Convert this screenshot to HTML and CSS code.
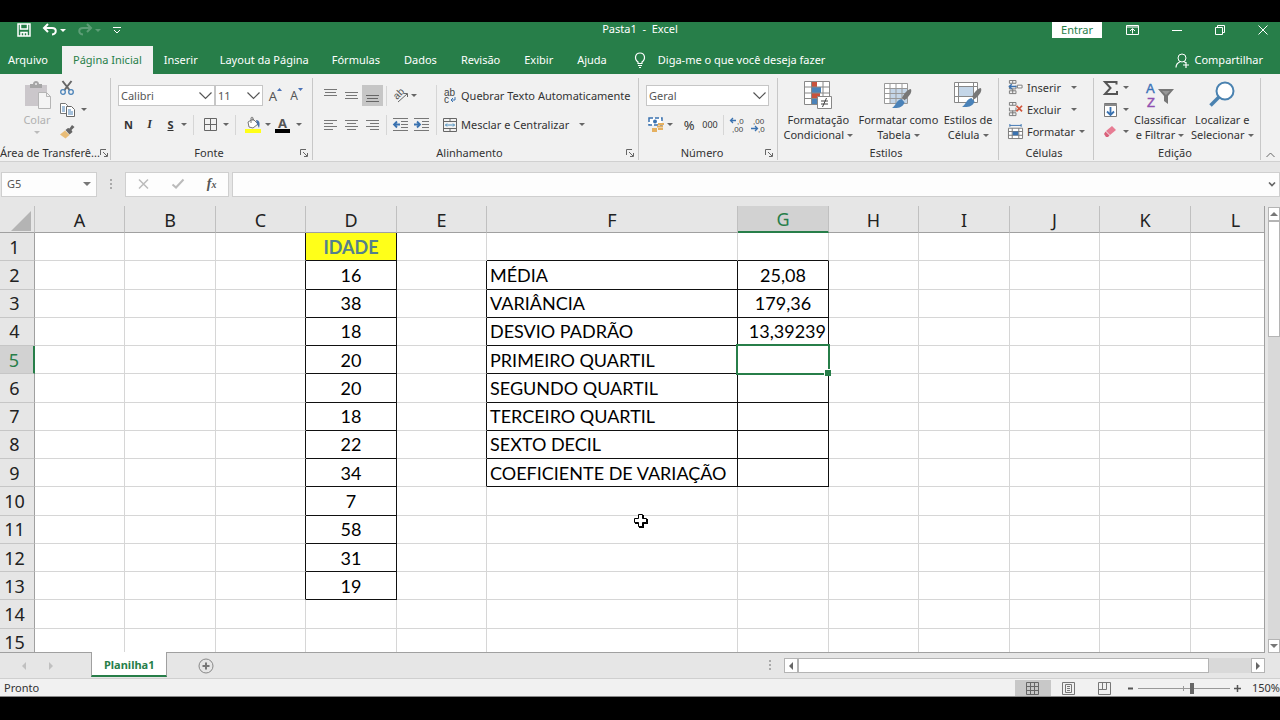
FILE: index.html
```html
<!DOCTYPE html>
<html lang="pt-BR">
<head>
<meta charset="UTF-8" />
<meta name="viewport" content="width=device-width, initial-scale=1" />
<title>Pasta1 - Excel</title>
<link rel="stylesheet" href="styles.css">
</head>
<body>

  <!-- Shared icons -->
  <svg class="defs" aria-hidden="true">
    <symbol id="launcher" viewBox="0 0 8 8"><path d="M.5 6V.5H6M3 3l4 4M7.5 4v3.5H4" fill="none" stroke="#666"/></symbol>
    <symbol id="cells" viewBox="0 0 16 16"><path d="M1.500.500h7v3h-7zM1.500 11.500h7v3h-7zM5 .500v3M5 11.500v3M1.500 6v3.500h7V6M5 9v3" fill="none" stroke="#777"/></symbol>
    <symbol id="brush" viewBox="0 0 16 16"><path d="M15 0c1.500 2-1 6-5 9L8 7c2-4 5-7 7-7z" fill="#777"/><path d="M7.500 8 10 10.500C9 15 4 15.500 0 15c3-1 3-6 7.500-7z" fill="#4a82b8"/></symbol>
  </svg>

  <header class="titlebar">
    <div class="quick">
      <button aria-label="Salvar"><svg width="14" height="14" viewBox="0 0 14 14"><path d="M1 1h12v12H1zM3.500 1v5h7V1M4 13V9.500h6V13M7 10v3" fill="none" stroke="#fff" stroke-width="1.500"/></svg></button>
      <button aria-label="Desfazer"><svg width="14" height="12" viewBox="0 0 14 12"><path d="M5 0 1 4l4 4M1.500 4H9c5 0 5 6 0 6.500" fill="none" stroke="#fff" stroke-width="2"/></svg><span class="caret light"></span></button>
      <button class="faded" aria-label="Refazer"><svg width="14" height="12" viewBox="0 0 14 12"><path d="m9 0 4 4-4 4M12.500 4H5c-5 0-5 6 0 6.500" fill="none" stroke="#fff" stroke-width="2"/></svg><span class="caret light"></span></button>
      <button aria-label="Personalizar"><svg width="8" height="7" viewBox="0 0 8 7"><path d="M0 .500h8M1 3l3 3 3-3" fill="none" stroke="#fff"/></svg></button>
    </div>
    <h1>Pasta1&nbsp; -&nbsp; Excel</h1>
    <div class="window-buttons">
      <button class="signin">Entrar</button>
      <button aria-label="Opções da Faixa de Opções"><svg width="13" height="10" viewBox="0 0 13 10"><path d="M.500.500h12v9H.500zM.500 2h12M6.500 8.500V4M4 6l2.500-2.500L9 6" fill="none" stroke="#fff"/></svg></button>
      <button aria-label="Minimizar"><svg width="10" height="10" viewBox="0 0 10 10"><path d="M0 5.500h10" stroke="#fff"/></svg></button>
      <button aria-label="Restaurar"><svg width="10" height="10" viewBox="0 0 10 10"><path d="M.500 2.500h7v7h-7zM2.500 2V.500h7v7H8" fill="none" stroke="#fff"/></svg></button>
      <button aria-label="Fechar"><svg width="10" height="10" viewBox="0 0 10 10"><path d="m.500.500 9 9M9.500.500l-9 9" stroke="#fff"/></svg></button>
    </div>
  </header>

  <nav class="tabs">
    <a href="#" class="file">Arquivo</a>
    <a href="#" class="active">Página Inicial</a>
    <a href="#">Inserir</a>
    <a href="#">Layout da Página</a>
    <a href="#">Fórmulas</a>
    <a href="#">Dados</a>
    <a href="#">Revisão</a>
    <a href="#">Exibir</a>
    <a href="#">Ajuda</a>
    <a href="#" class="tell"><svg width="12" height="16" viewBox="0 0 12 16"><path d="M4 11.500V10C0 7 1 1 6 1s6 6 2 9v1.500zM4 13.500h4M5 15.500h2" fill="none" stroke="#fff" stroke-width="1.200"/></svg>Diga-me o que você deseja fazer</a>
    <a href="#" class="share"><svg width="15" height="15" viewBox="0 0 15 15"><circle cx="7" cy="5" r="4" fill="none" stroke="#fff"/><path d="M1 14.500c0-3 2-5 4.500-6M8.500 8.500l2 1M8 12h6M11 9v6" fill="none" stroke="#fff" stroke-width="1.200"/></svg>Compartilhar</a>
  </nav>

  <section class="ribbon">
    <div class="group clipboard">
      <div class="group-body">
        <button class="big disabled"><svg width="28" height="28" viewBox="0 0 28 28"><path d="M2 4h22v21H2z" fill="#cbc7cb"/><path d="M7 3h3c0-4 6-4 6 0h3v4H7z" fill="#a5a5a5"/><circle cx="13" cy="3" r="1" fill="#eee"/><path d="M15.500 11.500h8l4 4v12h-12zM23.500 11.500v4h4" fill="#f4f4f4" stroke="#b5b5b5"/></svg><span>Colar</span><span class="caret"></span></button>
        <div class="stack">
          <button aria-label="Recortar"><svg width="14" height="14" viewBox="0 0 14 14"><path d="m2.500 0 7 9M11.500 0l-7 9" stroke="#666" stroke-width="2"/><circle cx="3" cy="11" r="2.300" fill="none" stroke="#4a82b8" stroke-width="1.300"/><circle cx="11" cy="11" r="2.300" fill="none" stroke="#4a82b8" stroke-width="1.300"/></svg></button>
          <button aria-label="Copiar"><svg width="15" height="14" viewBox="0 0 15 14"><path d="M.500.500h5l2 2v8h-7z" fill="#fff" stroke="#777"/><path d="M6.500 3.500h5l3 3v7h-8z" fill="#fff" stroke="#666"/><path d="M2 4h3M2 6h3M2 8h3M8 7h3M8 9h5M8 11h5" stroke="#4a82b8"/></svg><span class="caret"></span></button>
          <button aria-label="Pincel de Formatação"><svg width="15" height="14" viewBox="0 0 15 14"><path d="m12 0 2.500 2-3 3 1 2-3 2.500L5.500 5 8 3l1.500.500z" fill="#666"/><path d="m5 5.500 4.500 4.500-4 3.500L0 9.500z" fill="#e9bd78"/></svg></button>
        </div>
      </div>
      <div class="group-label"><span>Área de Transferê...</span><button aria-label="Mais opções"><svg width="8" height="8"><use href="#launcher"/></svg></button></div>
    </div>

    <div class="group font">
      <div class="group-body rows">
        <div class="row">
          <select class="combo font-name" aria-label="Fonte"><option>Calibri</option></select><select class="combo font-size" aria-label="Tamanho da fonte"><option>11</option></select>
          <button class="tool grow" aria-label="Aumentar fonte">A<svg width="5" height="4" viewBox="0 0 5 4"><path d="M0 3 2.500 0 5 3z" fill="#4a72b8"/></svg></button>
          <button class="tool shrink" aria-label="Diminuir fonte">A<svg width="5" height="4" viewBox="0 0 5 4"><path d="M0 0h5L2.500 3z" fill="#4a72b8"/></svg></button>
        </div>
        <div class="row">
          <button class="tool bold">N</button>
          <button class="tool italic">I</button>
          <button class="tool underline">S</button><span class="caret"></span>
          <span class="sep"></span>
          <button class="tool" aria-label="Bordas"><svg width="13" height="13" viewBox="0 0 13 13"><path d="M.500.500h12v12H.500zM6.500.500v12M.500 6.500h12" fill="none" stroke="#666"/></svg></button><span class="caret"></span>
          <span class="sep"></span>
          <button class="tool" aria-label="Cor de preenchimento"><svg width="16" height="16" viewBox="0 0 16 16"><path d="m3 5 5-3 5 5-5 4-4-1z" fill="#fff" stroke="#777"/><path d="M6 6V1c0-1 2-1 2 0v3" fill="none" stroke="#777"/><path d="M11 3c4 0 4 4 3 8l-2-4z" fill="#4a72a8"/><path d="M0 12h16v4H0z" fill="#ffff19"/></svg></button><span class="caret"></span>
          <button class="tool font-color" aria-label="Cor da fonte">A</button><span class="caret"></span>
        </div>
      </div>
      <div class="group-label"><span>Fonte</span><button aria-label="Mais opções"><svg width="8" height="8"><use href="#launcher"/></svg></button></div>
    </div>

    <div class="group align">
      <div class="group-body">
        <div class="rows">
          <div class="row">
            <button class="tool" aria-label="Alinhar em cima"><svg width="13" height="15" viewBox="0 0 13 15"><path d="M0 1.500h13M1 4.500h11M0 7.500h13" stroke="#777"/></svg></button>
            <button class="tool" aria-label="Alinhar no meio"><svg width="13" height="15" viewBox="0 0 13 15"><path d="M0 4.500h13M1 7.500h11M0 10.500h13" stroke="#777"/></svg></button>
            <button class="tool pressed" aria-label="Alinhar embaixo"><svg width="13" height="15" viewBox="0 0 13 15"><path d="M0 7.500h13M1 10.500h11M0 13.500h13" stroke="#666"/></svg></button>
            <span class="sep"></span>
            <button class="tool orient" aria-label="Orientação"><svg width="17" height="15" viewBox="0 0 17 15"><text transform="translate(5 12) rotate(-45)" font-size="10" fill="#555">ab</text><path d="m6 14 9-8M11.500 5.500h4V9" fill="none" stroke="#666"/></svg></button><span class="caret"></span>
          </div>
          <div class="row">
            <button class="tool" aria-label="Alinhar à esquerda"><svg width="13" height="13" viewBox="0 0 13 13"><path d="M0 2.500h13M0 5.500h9M0 8.500h13M0 11.500h9" stroke="#777"/></svg></button>
            <button class="tool" aria-label="Centralizar"><svg width="13" height="13" viewBox="0 0 13 13"><path d="M0 2.500h13M2 5.500h9M0 8.500h13M2 11.500h9" stroke="#777"/></svg></button>
            <button class="tool" aria-label="Alinhar à direita"><svg width="13" height="13" viewBox="0 0 13 13"><path d="M0 2.500h13M4 5.500h9M0 8.500h13M4 11.500h9" stroke="#777"/></svg></button>
            <span class="sep"></span>
            <button class="tool" aria-label="Diminuir recuo"><svg width="15" height="13" viewBox="0 0 15 13"><path d="M0 .500h15M8 3.500h7M8 6.500h7M8 9.500h7M0 12.500h15" stroke="#777"/><path d="M7 6.500H1M4 3.500l-3 3 3 3" fill="none" stroke="#3a72b0" stroke-width="1.800"/></svg></button>
            <button class="tool" aria-label="Aumentar recuo"><svg width="15" height="13" viewBox="0 0 15 13"><path d="M0 .500h15M8 3.500h7M8 6.500h7M8 9.500h7M0 12.500h15" stroke="#777"/><path d="M0 6.500h6M3 3.500l3 3-3 3" fill="none" stroke="#3a72b0" stroke-width="1.800"/></svg></button>
          </div>
        </div>
        <span class="sep tall"></span>
        <div class="rows">
          <button class="wide"><svg width="14" height="16" viewBox="0 0 14 16"><text x="1" y="8" font-size="10" fill="#444">ab</text><text x="1" y="15" font-size="10" fill="#444">c</text><path d="M12 9v3H8M10 10l-2 2 2 2" fill="none" stroke="#3a72b0"/></svg>Quebrar Texto Automaticamente</button>
          <button class="wide"><svg width="14" height="14" viewBox="0 0 14 14"><path d="M.500.500h13v13H.500zM.500 3.500h13M.500 10.500h13M7 .500v3M7 10.500v3" fill="none" stroke="#666"/><path d="M2.500 7h9M4 5.500 2.500 7 4 8.500M10 5.500 11.500 7 10 8.500" fill="none" stroke="#4a8fc0"/></svg>Mesclar e Centralizar<span class="caret spaced"></span></button>
        </div>
      </div>
      <div class="group-label"><span>Alinhamento</span><button aria-label="Mais opções"><svg width="8" height="8"><use href="#launcher"/></svg></button></div>
    </div>

    <div class="group number">
      <div class="group-body rows">
        <select class="combo" aria-label="Formato de número"><option>Geral</option></select>
        <div class="row">
          <button class="tool" aria-label="Formato de contabilização"><svg width="16" height="15" viewBox="0 0 16 15"><path d="M1 1h13v7H1z" fill="#fff" stroke="#3a72b0" stroke-width="1.500" stroke-dasharray="4 2"/><circle cx="7" cy="4.500" r="2" fill="#3a72b0"/><path d="M10 7h6M9 9.500h6M4 12h5M4 14h5M10 12h5" stroke="#e5b060" stroke-width="1.800"/></svg></button><span class="caret"></span>
          <button class="tool percent">%</button>
          <button class="tool zeros">000</button>
          <span class="sep"></span>
          <button class="tool" aria-label="Aumentar casas decimais"><svg width="15" height="15" viewBox="0 0 15 15"><path d="M6 3.500H1M3 1 .500 3.500 3 6" fill="none" stroke="#3a72b0" stroke-width="1.300"/><text x="7" y="7" font-size="8" fill="#444">,0</text><text x="2" y="15" font-size="8" fill="#444">,00</text></svg></button>
          <button class="tool" aria-label="Diminuir casas decimais"><svg width="15" height="15" viewBox="0 0 15 15"><path d="M0 11.500h6M4 9l2.500 2.500L4 14" fill="none" stroke="#3a72b0" stroke-width="1.300"/><text x="2" y="7" font-size="8" fill="#444">,00</text><text x="7" y="15" font-size="8" fill="#444">,0</text></svg></button>
        </div>
      </div>
      <div class="group-label"><span>Número</span><button aria-label="Mais opções"><svg width="8" height="8"><use href="#launcher"/></svg></button></div>
    </div>

    <div class="group styles">
      <div class="group-body">
        <button class="big"><svg width="28" height="28" viewBox="0 0 28 28"><path d="M.500.500h25v23H.500z" fill="#fff"/><path d="M8 1h5v5H8zM8 12h8v5H8z" fill="#c8523c"/><path d="M8 6h9v6H8zM8 17h5v6H8z" fill="#4a82b8"/><path d="M.500.500h25v23H.500zM.500 6h25M.500 12h25M.500 17.500h25M7.500.500v23M19 .500v23" fill="none" stroke="#888"/><path d="M13.500 15.500h14v12h-14z" fill="#fff" stroke="#888"/><path d="M17 20h7M17 23h7M22.500 17l-4 9" stroke="#444"/></svg><span>Formatação</span><span>Condicional<i class="caret"></i></span></button>
        <button class="big"><svg width="28" height="28" viewBox="0 0 28 28"><path d="M.500 2.500h23v20H.500z" fill="#fff"/><path d="M6 8h17v14H6z" fill="#c4d6e8"/><path d="M.500 2.500h23v20H.500zM.500 7.500h23M.500 12.500h23M.500 17.500h23M6 2.500v20M12 2.500v20M18 2.500v20" fill="none" stroke="#999"/><use href="#brush" x="8" y="8" width="20" height="20"/></svg><span>Formatar como</span><span>Tabela<i class="caret"></i></span></button>
        <button class="big"><svg width="28" height="28" viewBox="0 0 28 28"><path d="M.500 1.500h23v20H.500z" fill="#fff"/><path d="M5 6h14v9H5z" fill="#c4d6e8"/><path d="M.500 1.500h23v20H.500zM.500 5.500h23M.500 15.500h23M4.500 1.500v20M19.500 1.500v20" fill="none" stroke="#888"/><use href="#brush" x="8" y="7" width="20" height="20"/></svg><span>Estilos de</span><span>Célula<i class="caret"></i></span></button>
      </div>
      <div class="group-label"><span>Estilos</span></div>
    </div>

    <div class="group cells">
      <div class="group-body stack">
        <button><svg width="15" height="15" viewBox="0 0 16 16"><use href="#cells" width="16" height="16"/><path d="M10 5.500h5v3h-5z" fill="#fff" stroke="#777"/><path d="M9 7H1M4 4.500 1.500 7 4 9.500" fill="none" stroke="#3a72b0" stroke-width="1.500"/></svg>Inserir<span class="caret spaced"></span></button>
        <button><svg width="15" height="15" viewBox="0 0 16 16"><use href="#cells" width="16" height="16"/><path d="m9 4 6 6M15 4l-6 6" stroke="#d0553c" stroke-width="1.800"/></svg>Excluir<span class="caret spaced"></span></button>
        <button><svg width="15" height="15" viewBox="0 0 16 16"><path d="M2 1.500h12M2 0v3M14 0v3" stroke="#3a72b0"/><path d="M.500 4.500h15v11H.500zM.500 8h15M.500 12h15M4.500 4.500v11M11.500 4.500v11" fill="#fff" stroke="#777"/><path d="M5 8h6v4H5z" fill="#3a72b0"/></svg>Formatar<span class="caret"></span></button>
      </div>
      <div class="group-label"><span>Células</span></div>
    </div>

    <div class="group editing">
      <div class="group-body">
        <div class="stack">
          <button aria-label="AutoSoma"><svg width="15" height="14" viewBox="0 0 15 14"><path d="M13.500 3.500V1H2l5.500 6L2 13h12v-3" fill="none" stroke="#555" stroke-width="2"/></svg><span class="caret"></span></button>
          <button aria-label="Preencher"><svg width="15" height="14" viewBox="0 0 15 14"><path d="M1.500.500h12v13h-12z" fill="#fff" stroke="#777"/><path d="M1 1h13v2H1z" fill="#888"/><path d="M7.500 4v8M4 8.500 7.500 12 11 8.500" fill="none" stroke="#3a72b0" stroke-width="1.800"/></svg><span class="caret"></span></button>
          <button aria-label="Limpar"><svg width="15" height="14" viewBox="0 0 15 14"><path d="m9 1 4 4-6 5-4-4z" fill="#e77c93"/><path d="m2.500 6.500 4 4L5 12H3L1 9z" fill="#d9607a"/></svg><span class="caret"></span></button>
        </div>
        <button class="big"><svg width="28" height="28" viewBox="0 0 28 28"><text x="0" y="12" font-size="13" fill="#3a72b8" stroke="#3a72b8" stroke-width=".4">A</text><text x="1" y="26" font-size="13" fill="#9050b0" stroke="#9050b0" stroke-width=".4">Z</text><path d="M12 8h16l-6 7v8l-4-3v-5z" fill="#777"/><path d="M16 10h8l-4 4z" fill="#999"/></svg><span>Classificar</span><span>e Filtrar<i class="caret"></i></span></button>
        <button class="big"><svg width="28" height="28" viewBox="0 0 28 28"><circle cx="17" cy="10" r="8.500" fill="#fff" stroke="#4a82b0" stroke-width="2"/><path d="m11 16-8.500 8.500" stroke="#4a82b0" stroke-width="3.500"/></svg><span>Localizar e</span><span>Selecionar<i class="caret"></i></span></button>
      </div>
      <div class="group-label"><span>Edição</span></div>
    </div>

    <button class="collapse" aria-label="Recolher a Faixa de Opções"><svg width="9" height="6" viewBox="0 0 9 6"><path d="m.500 5 4-4 4 4" fill="none" stroke="#666"/></svg></button>
  </section>

  <section class="formula-bar">
    <select class="name-box" aria-label="Caixa de nome"><option>G5</option></select>
    <span class="dots"></span>
    <div class="formula-buttons">
      <button aria-label="Cancelar"><svg width="11" height="10" viewBox="0 0 11 10"><path d="m1 .500 9 9M10 .500l-9 9" stroke="#bbb" stroke-width="1.500"/></svg></button>
      <button aria-label="Inserir"><svg width="12" height="10" viewBox="0 0 12 10"><path d="m.500 5.500 3.500 3 7.500-8" fill="none" stroke="#bbb" stroke-width="2"/></svg></button>
      <button class="fx" aria-label="Inserir função">f<sub>x</sub></button>
    </div>
    <input class="formula" type="text" aria-label="Barra de fórmulas">
  </section>

  <main class="workspace">
    <div class="sheet">
      <table>
        <colgroup>
          <col class="heads"><col class="even"><col class="odd"><col class="even"><col class="odd"><col class="even"><col class="labels"><col class="odd"><col class="even"><col class="odd"><col class="even"><col class="odd"><col class="even">
        </colgroup>
        <thead>
          <tr><th class="corner"><svg width="20" height="20" viewBox="0 0 20 20"><path d="M20 0v20H0z" fill="#b4b4b4"/></svg></th><th>A</th><th>B</th><th>C</th><th>D</th><th>E</th><th>F</th><th class="current">G</th><th>H</th><th>I</th><th>J</th><th>K</th><th>L</th></tr>
        </thead>
        <tbody>
          <tr><th>1</th><td></td><td></td><td class="line-right"></td><td class="box title">IDADE</td><td></td><td class="line-bottom"></td><td class="line-bottom"></td><td></td><td></td><td></td><td></td><td></td></tr>
          <tr><th>2</th><td></td><td></td><td class="line-right"></td><td class="box">16</td><td class="line-right"></td><td class="box name">MÉDIA</td><td class="box">25,08</td><td></td><td></td><td></td><td></td><td></td></tr>
          <tr><th>3</th><td></td><td></td><td class="line-right"></td><td class="box">38</td><td class="line-right"></td><td class="box name">VARIÂNCIA</td><td class="box">179,36</td><td></td><td></td><td></td><td></td><td></td></tr>
          <tr><th>4</th><td></td><td></td><td class="line-right"></td><td class="box">18</td><td class="line-right"></td><td class="box name">DESVIO PADRÃO</td><td class="box number-right">13,39239</td><td></td><td></td><td></td><td></td><td></td></tr>
          <tr><th class="current">5</th><td></td><td></td><td class="line-right"></td><td class="box">20</td><td class="line-right"></td><td class="box name">PRIMEIRO QUARTIL</td><td class="box selected"></td><td></td><td></td><td></td><td></td><td></td></tr>
          <tr><th>6</th><td></td><td></td><td class="line-right"></td><td class="box">20</td><td class="line-right"></td><td class="box name">SEGUNDO QUARTIL</td><td class="box"></td><td></td><td></td><td></td><td></td><td></td></tr>
          <tr><th>7</th><td></td><td></td><td class="line-right"></td><td class="box">18</td><td class="line-right"></td><td class="box name">TERCEIRO QUARTIL</td><td class="box"></td><td></td><td></td><td></td><td></td><td></td></tr>
          <tr><th>8</th><td></td><td></td><td class="line-right"></td><td class="box">22</td><td class="line-right"></td><td class="box name">SEXTO DECIL</td><td class="box"></td><td></td><td></td><td></td><td></td><td></td></tr>
          <tr><th>9</th><td></td><td></td><td class="line-right"></td><td class="box">34</td><td class="line-right"></td><td class="box name">COEFICIENTE DE VARIAÇÃO</td><td class="box"></td><td></td><td></td><td></td><td></td><td></td></tr>
          <tr><th>10</th><td></td><td></td><td class="line-right"></td><td class="box">7</td><td></td><td></td><td></td><td></td><td></td><td></td><td></td><td></td></tr>
          <tr><th>11</th><td></td><td></td><td class="line-right"></td><td class="box">58</td><td></td><td></td><td></td><td></td><td></td><td></td><td></td><td></td></tr>
          <tr><th>12</th><td></td><td></td><td class="line-right"></td><td class="box">31</td><td></td><td></td><td></td><td></td><td></td><td></td><td></td><td></td></tr>
          <tr><th>13</th><td></td><td></td><td class="line-right"></td><td class="box">19</td><td></td><td></td><td></td><td></td><td></td><td></td><td></td><td></td></tr>
          <tr><th>14</th><td></td><td></td><td></td><td></td><td></td><td></td><td></td><td></td><td></td><td></td><td></td><td></td></tr>
          <tr><th>15</th><td></td><td></td><td></td><td></td><td></td><td></td><td></td><td></td><td></td><td></td><td></td><td></td></tr>
        </tbody>
      </table>
      <svg class="pointer" width="16" height="16" viewBox="0 0 16 16"><path d="M6 2h5v4h4v5h-4v4H6v-4H2V6h4z" fill="#000"/><path d="M5.500 1.500h4v4h4v4h-4v4h-4v-4h-4v-4h4z" fill="#fff" stroke="#000"/></svg>
    </div>
    <div class="vscroll">
      <button aria-label="Rolar para cima"><span class="arrow up"></span></button>
      <div class="thumb"></div>
      <button class="end" aria-label="Rolar para baixo"><span class="arrow down"></span></button>
    </div>
  </main>

  <section class="sheet-tabs">
    <div class="sheet-nav">
      <button aria-label="Planilha anterior"><span class="arrow left pale"></span></button>
      <button aria-label="Próxima planilha"><span class="arrow right pale"></span></button>
    </div>
    <a href="#" class="sheet-tab">Planilha1</a>
    <button class="add" aria-label="Nova planilha"><svg width="16" height="16" viewBox="0 0 16 16"><circle cx="8" cy="8" r="7" fill="none" stroke="#888"/><path d="M8 4.500v7M4.500 8h7" stroke="#777" stroke-width="2"/></svg></button>
    <span class="dots"></span>
    <div class="hscroll">
      <button aria-label="Rolar para a esquerda"><span class="arrow left"></span></button>
      <div class="thumb"></div>
      <button class="end" aria-label="Rolar para a direita"><span class="arrow right"></span></button>
    </div>
  </section>

  <footer class="status">
    <span class="ready">Pronto</span>
    <button class="view on" aria-label="Normal"><svg width="13" height="13" viewBox="0 0 13 13"><path d="M.500.500h12v12H.500zM4.500.500v12M8.500.500v12M.500 4.500h12M.500 8.500h12" fill="none" stroke="#666"/></svg></button>
    <button class="view" aria-label="Layout da Página"><svg width="13" height="13" viewBox="0 0 13 13"><path d="M.500.500h12v12H.500zM3.500 2.500h6v8h-6zM5 4.500h3M5 6.500h3M5 8.500h3" fill="none" stroke="#777"/></svg></button>
    <button class="view" aria-label="Quebra de Página"><svg width="13" height="13" viewBox="0 0 13 13"><path d="M.500.500h12v12H.500zM4.500.500v7M8.500.500v7H.500" fill="none" stroke="#777"/></svg></button>
    <button class="zoom-step" aria-label="Reduzir"><svg width="7" height="7" viewBox="0 0 7 7"><path d="M1 3.500h5" stroke="#555" stroke-width="2"/></svg></button>
    <input class="zoom" type="range" min="0" max="100" value="59" aria-label="Zoom">
    <button class="zoom-step" aria-label="Ampliar"><svg width="7" height="7" viewBox="0 0 7 7"><path d="M0 3.500h7M3.500 0v7" stroke="#555" stroke-width="1.500"/></svg></button>
    <span class="percent-label">150%</span>
  </footer>

</body>
</html>
```
FILE: styles.css
```css
* {
  box-sizing: border-box;
}

body {
  margin: 0;
  padding: 22px 0 23px;
  height: 100vh;
  display: flex;
  flex-direction: column;
  overflow: hidden;
  background: #000;
  color: #333;
  font-family: "Noto Sans", "Open Sans", sans-serif;
  font-size: 11px;
  line-height: 14px;
}

button, select, input {
  font: inherit;
  color: inherit;
}

button {
  display: flex;
  align-items: center;
  justify-content: center;
  padding: 0;
  border: none;
  background: none;
  white-space: nowrap;
}

a {
  color: inherit;
  text-decoration: none;
}

svg {
  display: block;
  flex: none;
  overflow: visible;
}

svg text {
  font-family: "Liberation Sans", sans-serif;
}

.defs {
  position: absolute;
  width: 0;
  height: 0;
}

.caret {
  flex: none;
  display: inline-block;
  border: 3px solid transparent;
  border-top-color: #666;
  border-bottom: none;
}

.caret.light {
  border-top-color: #fff;
}

.caret.spaced {
  margin-left: 6px;
}

/* Title bar */
.titlebar {
  display: grid;
  grid-template-columns: 1fr auto 1fr;
  height: 24px;
  padding-bottom: 8px;
  background: #277e49;
  color: #fff;
}

.titlebar h1 {
  margin: 0;
  font-size: 11px;
  font-weight: 400;
}

.quick {
  display: flex;
  gap: 12px;
  padding-left: 17px;
}

.quick button {
  gap: 3px;
}

.quick .faded {
  opacity: 0.25;
}

.window-buttons {
  display: flex;
  justify-content: flex-end;
  gap: 33px;
  padding-right: 12px;
}

.window-buttons .signin {
  width: 50px;
  margin-right: -9px;
  background: #fff;
  color: #277e49;
}

/* Ribbon tabs */
.tabs {
  display: flex;
  align-items: stretch;
  height: 28px;
  background: #277e49;
  color: #fff;
  white-space: nowrap;
}

.tabs a {
  display: flex;
  align-items: center;
  padding: 0 12px;
}

.tabs a:nth-child(-n+4) {
  padding: 0 11px;
}

.tabs a.file {
  padding: 0 14px 0 8px;
}

.tabs .active {
  background: #f1f1f1;
  color: #277e49;
}

.tabs .tell {
  gap: 12px;
  padding-left: 15px;
}

.tabs .share {
  gap: 4px;
  margin-left: auto;
  padding-right: 17px;
}

/* Ribbon */
.ribbon {
  display: flex;
  height: 88px;
  padding: 4px 0 0;
  background: #f1f1f1;
  border-bottom: 1px solid #d0d0d0;
}

.group {
  display: flex;
  flex-direction: column;
  flex: none;
  margin-bottom: 1px;
  border-right: 1px solid #c8c8c8;
}

.group-body {
  display: flex;
  flex: 1;
}

.group-label {
  display: flex;
  align-items: center;
  height: 14px;
  padding-right: 4px;
  white-space: nowrap;
}

.group-label span {
  flex: 1;
  text-align: center;
}

.rows {
  display: flex;
  flex-direction: column;
  gap: 8px;
  padding-top: 7px;
}

.row {
  display: flex;
  align-items: center;
  height: 21px;
}

.stack {
  display: flex;
  flex-direction: column;
  gap: 7px;
  padding-top: 2px;
}

.stack button {
  gap: 4px;
  height: 15px;
  justify-content: flex-start;
}

.tool {
  width: 21px;
  height: 21px;
}

.tool.pressed {
  background: #c6c6c6;
}

.sep {
  width: 1px;
  height: 20px;
  margin: 0 3px;
  background: #d6d6d6;
}

.big {
  flex-direction: column;
  justify-content: flex-start;
  padding-top: 3px;
}

.big svg {
  margin-bottom: 3px;
}

.big span {
  min-height: 15px;
  line-height: 15px;
}

.big span .caret {
  margin: 0 0 2px 3px;
}

.big.disabled {
  color: #b0b0b0;
}

.big.disabled .caret {
  min-height: 0;
  margin-top: 4px;
  border-top-color: #bbb;
}

.combo {
  height: 21px;
  padding: 0 2px;
  border: 1px solid #c6c6c6;
  border-radius: 0;
  appearance: none;
  color: #555;
  background: #fff url("data:image/svg+xml,%3Csvg xmlns='http://www.w3.org/2000/svg' width='13' height='8'%3E%3Cpath d='M.5.5l6 6 6-6' fill='none' stroke='%23555' stroke-width='1.2'/%3E%3C/svg%3E") no-repeat right 2px center;
}

.clipboard {
  width: 111px;
}

.clipboard .group-body {
  gap: 9px;
  padding-left: 23px;
}

.clipboard .stack button {
  gap: 6px;
}

.font {
  width: 202px;
  padding-left: 7px;
}

.font-name {
  width: 97px;
}

.font-size {
  width: 48px;
  margin-right: 2px;
}

.grow, .shrink {
  align-items: flex-start;
  font-size: 13px;
  line-height: 22px;
  color: #555;
}

.shrink {
  font-size: 12px;
}

.grow svg, .shrink svg {
  margin-top: 3px;
}

.bold {
  font-weight: 700;
}

.italic {
  font: italic 700 12px "Liberation Serif", serif;
}

.underline {
  font-weight: 700;
  text-decoration: underline;
}

.font .row .sep {
  margin: 0 6px;
}

.font .sep + .tool {
  margin-right: 2px;
}

.font-color {
  width: 15px;
  height: 16px;
  margin: 0 6px 0 4px;
  border-bottom: 4px solid #000;
  font-size: 13px;
  font-weight: 700;
  line-height: 12px;
  color: #555;
}

.align {
  width: 326px;
}

.align .group-body {
  padding-left: 7px;
}

.sep.tall {
  height: 50px;
  margin: 7px 6px 0 4px;
}

.align .rows:last-child {
  flex: 1;
}

.wide {
  gap: 4px;
  height: 21px;
  justify-content: flex-start;
}

.number {
  width: 139px;
}

.number .group-body {
  padding-left: 7px;
  padding-right: 8px;
}

.percent {
  margin-left: 6px;
  font-size: 13px;
}

.zeros {
  font-size: 9px;
}

.styles {
  width: 221px;
}

.styles .group-body {
  justify-content: space-evenly;
}

.cells {
  width: 95px;
}

.cells .group-body {
  padding-left: 9px;
}

.editing {
  width: 167px;
}

.editing .group-body {
  gap: 5px;
  padding-left: 9px;
}

.editing .stack button {
  gap: 5px;
}

.collapse {
  margin: auto auto 3px;
}

/* Formula bar */
.formula-bar {
  display: flex;
  align-items: center;
  height: 44px;
  padding-left: 1px;
  background: #e6e6e6;
}

.name-box {
  width: 96px;
  height: 25px;
  padding: 0 5px;
  border: 1px solid #cfcfcf;
  border-radius: 0;
  appearance: none;
  color: #555;
  background: #fdfdfd url("data:image/svg+xml,%3Csvg xmlns='http://www.w3.org/2000/svg' width='8' height='4'%3E%3Cpath d='M0 0h8L4 4z' fill='%23777'/%3E%3C/svg%3E") no-repeat right 5px center;
}

.dots {
  width: 2px;
  height: 11px;
  margin: 0 13px;
  background: repeating-linear-gradient(#aaa 0 2px, transparent 2px 4px);
}

.formula-buttons {
  display: flex;
  justify-content: space-around;
  width: 104px;
  height: 25px;
  margin-right: 3px;
  border: 1px solid #cfcfcf;
  background: #fdfdfd;
}

.fx {
  font: italic 700 14px "Liberation Serif", serif;
  color: #555;
}

.fx sub {
  font-size: 10px;
}

.formula {
  flex: 1;
  height: 25px;
  border: 1px solid #cfcfcf;
  background: #fdfdfd url("data:image/svg+xml,%3Csvg xmlns='http://www.w3.org/2000/svg' width='8' height='5'%3E%3Cpath d='M1 .5l3 3 3-3' fill='none' stroke='%23666' stroke-width='1.6'/%3E%3C/svg%3E") no-repeat right 3px center;
}

/* Worksheet */
.workspace {
  display: flex;
  flex: 1;
  min-height: 0;
  background: #e6e6e6;
}

.sheet {
  position: relative;
  flex: 1;
  min-width: 0;
  overflow: hidden;
  border-right: 1px solid #a0a0a0;
  border-bottom: 1px solid #a0a0a0;
}

.sheet table {
  width: 1281px;
  height: 451px;
  table-layout: fixed;
  border-spacing: 0;
  background: #fff;
}

.heads {
  width: 35px;
}

.even {
  width: 90px;
}

.odd {
  width: 91px;
}

.labels {
  width: 251px;
}

.sheet th {
  padding: 0;
  border-right: 1px solid #a0a0a0;
  border-bottom: 1px solid #c6c6c6;
  background: #e6e6e6;
  color: #222;
  font-size: 18px;
  font-weight: 400;
  line-height: 24px;
}

.sheet tbody th {
  padding-right: 5px;
}

.sheet thead th {
  height: 27px;
  padding-top: 2px;
  border-right-color: #c0c0c0;
  border-bottom-color: #a0a0a0;
}

.sheet .corner svg {
  margin: 2px 3px 0 auto;
}

.sheet th.current {
  background: #d2d2d2;
  color: #277e49;
}

.sheet thead th.current {
  padding-top: 1px;
  border-bottom: 2px solid #277e49;
}

.sheet tbody th.current {
  border-right: 2px solid #277e49;
}

.sheet td {
  padding: 0;
  border-right: 1px solid #d6d6d6;
  border-bottom: 1px solid #d6d6d6;
  color: #000;
  font-family: Lato, sans-serif;
  font-size: 18px;
  line-height: 24px;
  text-align: center;
  white-space: nowrap;
}

.sheet td.box {
  border-color: #111;
}

.sheet td.line-right {
  border-right-color: #111;
}

.sheet td.line-bottom {
  border-bottom-color: #111;
}

.sheet td.title {
  background: #ffff19;
  color: #54808c;
  font-weight: 700;
}

.sheet td.name {
  padding-left: 3px;
  text-align: left;
}

.sheet td.number-right {
  padding-right: 2px;
  text-align: right;
}

.selected {
  position: relative;
}

.selected::before {
  content: "";
  position: absolute;
  inset: -2px;
  border: 2px solid #277e49;
}

.selected::after {
  content: "";
  position: absolute;
  right: -3px;
  bottom: -3px;
  width: 6px;
  height: 6px;
  border: 1px solid #fff;
  border-width: 1px 0 0 1px;
  background: #277e49;
}

.pointer {
  position: absolute;
  left: 633px;
  top: 307px;
}

/* Scrollbars */
.arrow {
  border: 4px solid transparent;
}

.arrow.up {
  border-top: none;
  border-bottom-color: #777;
}

.arrow.down {
  border-bottom: none;
  border-top-color: #777;
}

.arrow.left {
  border-left: none;
  border-right-color: #666;
}

.arrow.right {
  border-right: none;
  border-left-color: #666;
}

.arrow.left.pale {
  border-right-color: #c0c0c0;
}

.arrow.right.pale {
  border-left-color: #c0c0c0;
}

.vscroll, .hscroll {
  display: flex;
  background: #d9d9d9;
}

.vscroll {
  flex-direction: column;
  width: 12px;
  margin: 1px 0 0 3px;
}

.vscroll button, .vscroll .thumb,
.hscroll button, .hscroll .thumb {
  border: 1px solid #b4b4b4;
  background: #fff;
}

.vscroll button {
  height: 14px;
}

.vscroll .thumb {
  height: 26%;
}

.vscroll .end {
  margin-top: auto;
}

.hscroll {
  width: 481px;
  height: 15px;
}

.hscroll button {
  width: 14px;
}

.hscroll .thumb {
  width: 411px;
}

.hscroll .end {
  margin-left: auto;
}

/* Sheet tabs */
.sheet-tabs {
  display: flex;
  align-items: center;
  height: 26px;
  padding-right: 15px;
  background: #e6e6e6;
  border-bottom: 1px solid #cfcfcf;
}

.sheet-nav {
  display: flex;
  gap: 23px;
  width: 91px;
  padding-left: 22px;
}

.sheet-tab {
  align-self: flex-start;
  height: 25px;
  margin-top: -1px;
  padding: 6px 12px 0;
  position: relative;
  background: #fff;
  border: 1px solid #a0a0a0;
  border-top: none;
  border-bottom: 2px solid #277e49;
  color: #277e49;
  font-weight: 700;
}

.add {
  margin-left: 31px;
}

.sheet-tabs .dots {
  margin-left: auto;
}

/* Status bar */
.status {
  display: flex;
  align-items: center;
  height: 18px;
  padding-top: 1px;
  background: #f1f1f1;
  border-bottom: 1px solid #888;
}

.ready {
  margin-right: auto;
  padding-left: 4px;
}

.view {
  width: 36px;
  height: 16px;
}

.view.on {
  background: #c8c8c8;
}

.zoom-step {
  width: 15px;
}

.zoom {
  width: 92px;
  height: 15px;
  margin: 0;
  appearance: none;
  background:
    linear-gradient(#999, #999) center / 1px 5px no-repeat,
    linear-gradient(#999, #999) center / 100% 1px no-repeat;
}

.zoom::-webkit-slider-thumb {
  appearance: none;
  width: 4px;
  height: 11px;
  background: #666;
}

.percent-label {
  margin-left: 7px;
}
```
